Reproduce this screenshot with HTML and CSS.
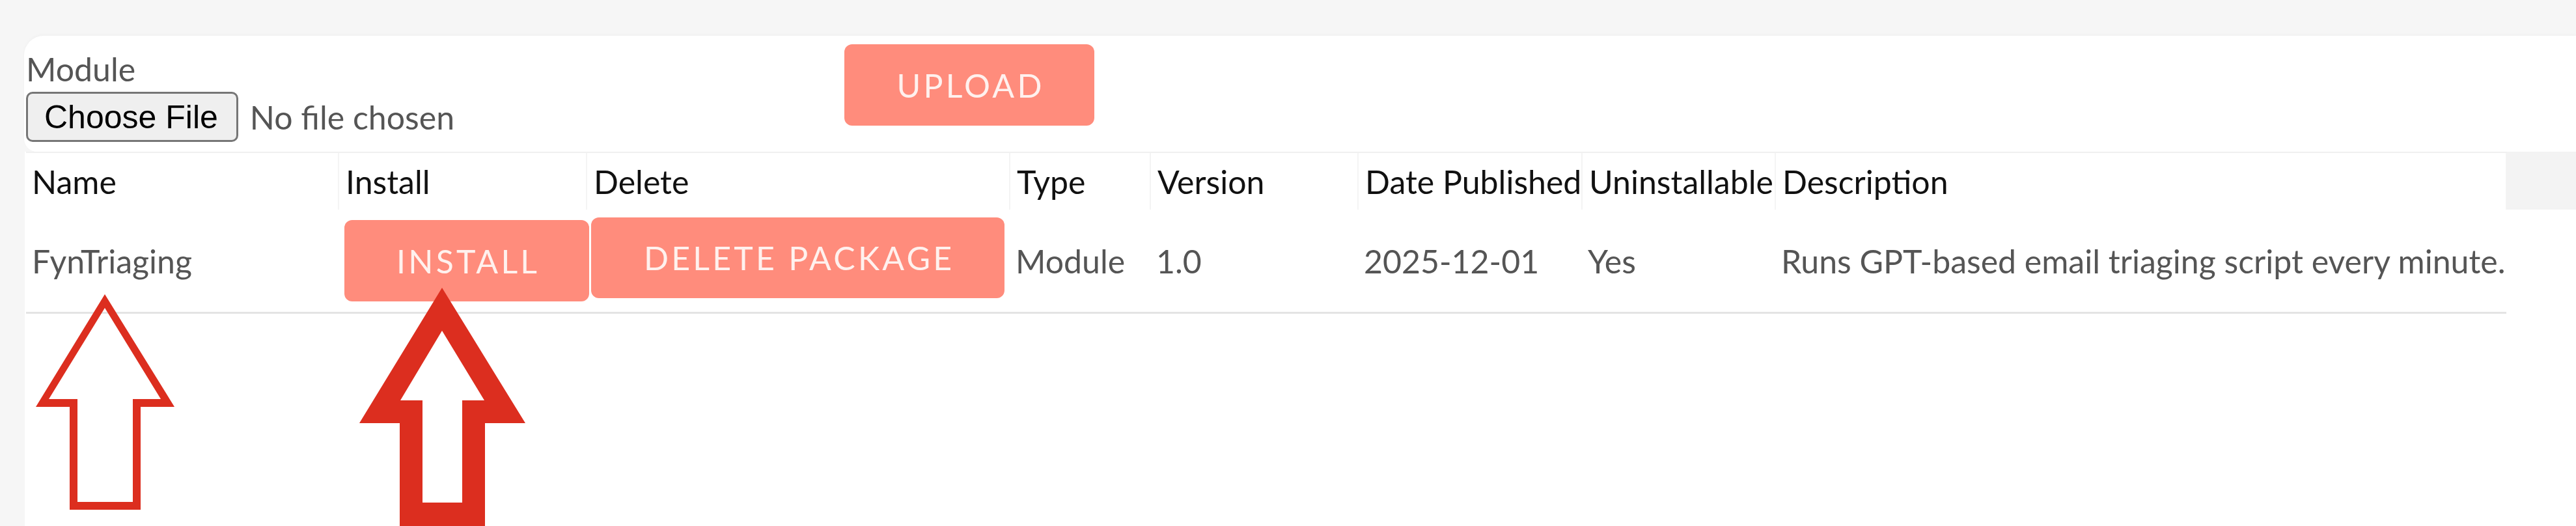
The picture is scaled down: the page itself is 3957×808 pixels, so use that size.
FILE: index.html
```html
<!DOCTYPE html>
<html lang="en">
<head>
<meta charset="utf-8">
<title>Packages</title>
<link rel="stylesheet" href="styles.css">
</head>
<body>
<div class="page">
  <section class="upload-card">
    <div class="field">
      <label class="field-label">Module</label>
      <div class="file-input">
        <span class="file-btn">Choose File</span>
        <span class="file-name">No file chosen</span>
      </div>
    </div>
    <button class="btn btn-upload">Upload</button>
  </section>

  <section class="packages">
    <table class="pkg-table">
      <colgroup>
        <col class="c-name"><col class="c-install"><col class="c-delete"><col class="c-type"><col class="c-version"><col class="c-date"><col class="c-uninst"><col class="c-desc"><col class="c-filler">
      </colgroup>
      <thead>
        <tr>
          <th>Name</th>
          <th>Install</th>
          <th>Delete</th>
          <th>Type</th>
          <th>Version</th>
          <th>Date Published</th>
          <th>Uninstallable</th>
          <th>Description</th>
          <th class="filler"></th>
        </tr>
      </thead>
      <tbody>
        <tr>
          <td>FynTriaging</td>
          <td class="cell-install"><button class="btn btn-install">Install</button></td>
          <td class="cell-delete"><button class="btn btn-delete">Delete Package</button></td>
          <td>Module</td>
          <td>1.0</td>
          <td>2025-12-01</td>
          <td>Yes</td>
          <td class="cell-desc">Runs GPT-based email triaging script every minute.</td>
          <td class="filler"></td>
        </tr>
      </tbody>
    </table>
  </section>

  <svg class="annotations" viewBox="0 0 3957 808" width="3957" height="808" aria-hidden="true">
    <path fill="#dc2e1f" fill-rule="evenodd" d="M161,452 L268,625 L216,625 L216,783 L107,783 L107,625 L55,625 Z M161,473 L247,613 L204,613 L204,771 L119,771 L119,613 L75,613 Z"/>
    <path fill="#dc2e1f" fill-rule="evenodd" d="M679,442 L807,650 L745,650 L745,812 L614,812 L614,650 L552,650 Z M679,508 L744,615 L710,615 L710,772 L649,772 L649,615 L615,615 Z"/>
  </svg>
</div>
</body>
</html>
```

FILE: styles.css
```css
html, body {
  margin: 0;
  padding: 0;
}

body {
  background: #f6f6f6;
  font-family: Lato, "Open Sans", "Noto Sans", sans-serif;
  overflow: hidden;
}

.page {
  position: relative;
  width: 3957px;
  height: 808px;
  display: flex;
  flex-direction: column;
}

.upload-card {
  margin: 55px 0 0 37px;
  height: 178px;
  box-sizing: border-box;
  padding-left: 3px;
  background: #fff;
  border-radius: 30px 0 0 20px;
  box-shadow: 0 -2px 5px rgba(0, 0, 0, 0.025);
  display: grid;
  grid-template-columns: 1257px auto;
  align-items: start;
}

.field {
  padding-top: 23px;
}

.field-label {
  display: block;
  font-size: 50px;
  line-height: 57px;
  color: #555;
}

.file-input {
  display: flex;
  align-items: center;
  gap: 18px;
  margin-top: 6px;
}

.file-btn {
  display: flex;
  align-items: center;
  height: 77px;
  box-sizing: border-box;
  padding: 0 28px 0 25px;
  font-family: "Liberation Sans", Arial, sans-serif;
  font-size: 50px;
  color: #000;
  background: #efefef;
  border: 3px solid #767676;
  border-radius: 10px;
}

.file-name {
  font-size: 50px;
  color: #555;
}

.btn {
  display: flex;
  align-items: center;
  justify-content: center;
  box-sizing: border-box;
  padding: 0;
  border: none;
  border-radius: 12px;
  background: #ff8c7c;
  color: #fff1ee;
  font-family: Lato, "Open Sans", sans-serif;
  font-size: 50px;
  letter-spacing: 0.085em;
  text-indent: 0.085em;
  text-transform: uppercase;
  white-space: nowrap;
}

.btn-upload {
  margin-top: 13px;
  width: 384px;
  height: 125px;
}

.packages {
  flex: 1;
  margin-left: 38px;
  padding-left: 2px;
  background: #fff;
}

.pkg-table {
  border-collapse: collapse;
  table-layout: fixed;
  width: 3917px;
  font-size: 50px;
}

.c-name { width: 480px; }
.c-install { width: 381px; }
.c-delete { width: 650px; }
.c-type { width: 216px; }
.c-version { width: 319px; }
.c-date { width: 344px; }
.c-uninst { width: 297px; }
.c-desc { width: 1123px; }
.c-filler { width: 107px; }

.pkg-table th {
  height: 87px;
  padding: 0 0 0 10px;
  text-align: left;
  font-weight: 400;
  color: #111;
  white-space: nowrap;
  border-top: 2px solid #f0f0f0;
  border-left: 2px solid #f4f4f4;
  vertical-align: middle;
}

.pkg-table th:first-child {
  border-left: none;
  padding-left: 9px;
}

.pkg-table th.filler {
  background: #f3f3f3;
  border-top-color: #f3f3f3;
}

.pkg-table td {
  height: 157px;
  padding: 0 0 0 9px;
  color: #555;
  white-space: nowrap;
  border-bottom: 3px solid #e4e4e4;
  vertical-align: middle;
  overflow: visible;
}

.pkg-table td.filler {
  border-bottom: none;
}

.pkg-table td.cell-delete {
  padding-left: 7px;
}

.btn-install {
  width: 376px;
  height: 125px;
}

.btn-delete {
  width: 635px;
  height: 124px;
  margin-bottom: 9px;
}

.annotations {
  position: absolute;
  top: 0;
  left: 0;
  pointer-events: none;
}
```
